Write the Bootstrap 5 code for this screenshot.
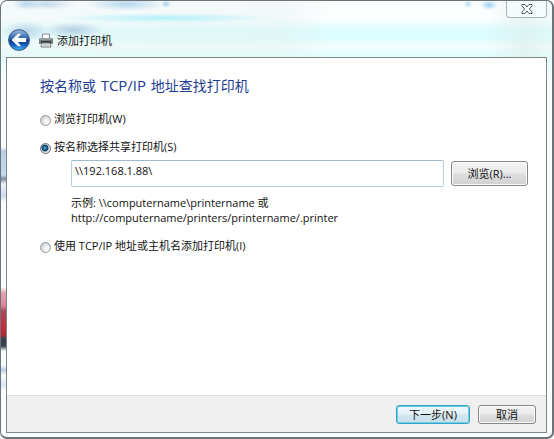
<!DOCTYPE html>
<html lang="zh-CN">
<head>
<meta charset="utf-8">
<meta name="viewport" content="width=device-width, initial-scale=1">
<title>添加打印机</title>
<link href="https://cdn.jsdelivr.net/npm/bootstrap@5.3.0/dist/css/bootstrap.min.css" rel="stylesheet">
<style>
body{font:11px/15px "Open Sans","Noto Sans CJK SC",sans-serif;color:#111;background:#fff}
.wizard{border:1px solid #6c7478;border-right-width:2px;border-bottom-width:2px;border-radius:7px;padding:0 5px 4px;
 background:
 radial-gradient(ellipse 14px 6px at 25px 3px,#bcd8ee,#bcd8ee00),
 radial-gradient(ellipse 30px 6px at 45px 3px,#c3daeb,#c3daeb00),
 radial-gradient(ellipse 40px 7px at 125px 3px,#b4d9ee,#b4d9ee00),
 radial-gradient(ellipse 5px 4px at 165px 3px,#a4d0ee,#a4d0ee00),
 radial-gradient(ellipse 5px 4px at 467px 3px,#b5dcf5,#b5dcf500),
 radial-gradient(ellipse 9px 5px at 488px 4px,#9bd0f3,#9bd0f300),
 radial-gradient(ellipse 24px 10px at 25px 30px,#b9d5e8,#b9d5e800),
 radial-gradient(ellipse 30px 8px at 72px 29px,#b3cee2,#b3cee200),
 radial-gradient(ellipse 110px 5px at 165px 17px,#b3f0f9,#b3f0f900),
 linear-gradient(#0000 146px,#b9cee3 150px,#c2dcf2 174px,#7d8ba3 178px,#eef4fa 183px,#c9daf0 195px,#0000 201px) 0 0/5px 100% no-repeat,
 linear-gradient(#0000 286px,#e5a3b1 292px,#df8295 305px,#a64c5a 310px,#c52c3d 325px,#b32837 334px,#39414d 338px,#39414d 345px,#0000 350px,#0000 364px,#b6cae6 369px,#0000 374px,#d9e7f7 384px,#0000 390px) 0 0/5px 100% no-repeat,
 linear-gradient(90deg,#eaf3f366 0,#e5efef66 52%,#fff0 60%,#fff0 88%,#dceae988 95%,#e5f5f366) 0 0/100% 57px no-repeat,
 linear-gradient(#fdfdfd,#fbffff 18px,#dcfdfe 29px,#dcfdfe 37px,#f3fdfd 44px,#e1fffe 56px,#fbfefe 80px)}
.titlebar{height:56px}
.back-btn{width:24px;height:24px;margin:27px 0 0 1px}
.printer-icon{margin:32px 4px 0 8px}
.caption-text{margin-top:32px}
.close-btn{width:41px;height:17px;border:1px solid #a5b3b6;border-top:0;border-radius:0 0 4px 4px;background:#f8ffff99}
.client{border:1px solid #7d8587;background:#fff}
.wizard-body{padding:18px 18px 0 33px}
.wizard-title{font-size:14px;line-height:18px;color:#1d3e94;margin:0 0 16px}
.title-term{font-size:15px;padding:0 1px}
.option{gap:3px;min-height:16px}
.option .form-check-input{width:11px;height:11px;margin:4px 0 0;border:1px solid #969b9f;background:radial-gradient(circle at 6px 6px,#f8f8f8 20%,#c5c9cd 85%);box-shadow:none}
.option .form-check-input:checked{border-color:#66717b;background:radial-gradient(circle at 4px 4px,#7cd3ee 0,#267da8 1px,#153f62 3px,#e8edf0 4px,#cbd1d5 6px)}
.details{padding-left:31px;margin:6px 0 13px}
.path-field{height:27px;border:1px solid #b4cfe0;border-top-color:#9ebbd0;border-radius:2px;padding:0 3px 6px;font-size:11px;line-height:18px;color:#111}
.win-btn{height:19px;padding:0;border:1px solid #84888a;border-radius:3px;font-size:11px;line-height:15px;color:#111;background:linear-gradient(#f3f3f3,#ebebeb 48%,#dedede 52%,#d1d1d1);box-shadow:inset 0 0 0 1px #fafafa}
.browse-btn{width:77px;height:25px;margin-left:7px}
.next-btn{width:74px;border-color:#3c9fc4;background:linear-gradient(#eef8fb,#e3f1f6 48%,#d3e7ef 52%,#c8dfe9);box-shadow:inset 0 0 0 1px #63d1ed}
.cancel-btn{width:58px}
.wizard-foot{height:37px;padding:0 10px 0 0;gap:8px;background:#f0f0f0;border-top:1px solid #dfdfdf}
</style>
</head>
<body>
<main class="wizard vh-100 d-flex flex-column">
 <header class="titlebar d-flex align-items-start flex-shrink-0">
  <button type="button" class="back-btn btn p-0 border-0 d-flex" aria-label="返回">
   <svg width="24" height="24" viewBox="0 0 24 24" aria-hidden="true">
    <defs><linearGradient id="orb" x2="0" y2="1"><stop stop-color="#a3bee2"/><stop offset=".45" stop-color="#245dac"/><stop offset=".52" stop-color="#0a3487"/><stop offset=".75" stop-color="#1260c2"/><stop offset="1" stop-color="#47c5f7"/></linearGradient></defs>
    <circle cx="12" cy="12" r="11.2" fill="#c5d5df"/><circle cx="12" cy="12" r="10.3" fill="url(#orb)" stroke="#34558b"/>
    <path d="M4.500 12 11 5.800h3.200L10.800 10h8.400v4h-8.400l3.400 4.200H11z" fill="#fff"/>
   </svg>
  </button>
  <svg class="printer-icon flex-shrink-0" width="14" height="15" viewBox="0 0 14 15" aria-hidden="true">
   <path d="M3.500 1h7v5h-7z" fill="#fff" stroke="#82898d"/><path d="M1 5h12l1 1v5H0V6z" fill="#777f83"/><path d="M1 6h12" stroke="#b8bec1"/><path d="M2 8h10v2H2z" fill="#343a3e"/><path d="M3 10h8l1 4H2z" fill="#f4f6f7" stroke="#747b7f"/><path d="M4 12h6" stroke="#a3aaae"/>
  </svg>
  <div class="caption-text">添加打印机</div>
  <button type="button" class="close-btn btn p-0 ms-auto d-flex align-items-center justify-content-center" aria-label="关闭">
   <svg width="12" height="10" viewBox="0 0 12 10" aria-hidden="true"><path d="M1 .5h3L6 3 8 .5h3V2L8.300 5 11 8v1.500H8L6 7 4 9.500H1V8l2.700-3L1 2z" fill="#fff" stroke="#555d63"/></svg>
  </button>
 </header>
 <form class="client flex-grow-1 d-flex flex-column" onsubmit="return false">
  <div class="wizard-body flex-grow-1">
   <h1 class="wizard-title fw-normal">按名称或 <span class="title-term">TCP/IP</span> 地址查找打印机</h1>
   <div class="option d-flex"><input class="form-check-input flex-shrink-0" type="radio" name="mode" id="browse"><label for="browse">浏览打印机(W)</label></div>
   <div class="option d-flex mt-2 pt-1"><input class="form-check-input flex-shrink-0" type="radio" name="mode" id="byname" checked><label for="byname">按名称选择共享打印机(S)</label></div>
   <div class="details">
    <div class="d-flex align-items-center">
     <input type="text" class="path-field form-control flex-grow-1" aria-label="共享打印机名称" value="\\192.168.1.88\">
     <button type="button" class="win-btn browse-btn btn flex-shrink-0">浏览(R)...</button>
    </div>
    <div class="mt-2">示例: \\computername\printername 或<br>http://computername/printers/printername/.printer</div>
   </div>
   <div class="option d-flex"><input class="form-check-input flex-shrink-0" type="radio" name="mode" id="tcpip"><label for="tcpip">使用 TCP/IP 地址或主机名添加打印机(I)</label></div>
  </div>
  <footer class="wizard-foot d-flex align-items-center justify-content-end">
   <button type="submit" class="win-btn next-btn btn">下一步(N)</button>
   <button type="button" class="win-btn cancel-btn btn">取消</button>
  </footer>
 </form>
</main>
<script src="https://cdn.jsdelivr.net/npm/bootstrap@5.3.0/dist/js/bootstrap.bundle.min.js"></script>
</body>
</html>
